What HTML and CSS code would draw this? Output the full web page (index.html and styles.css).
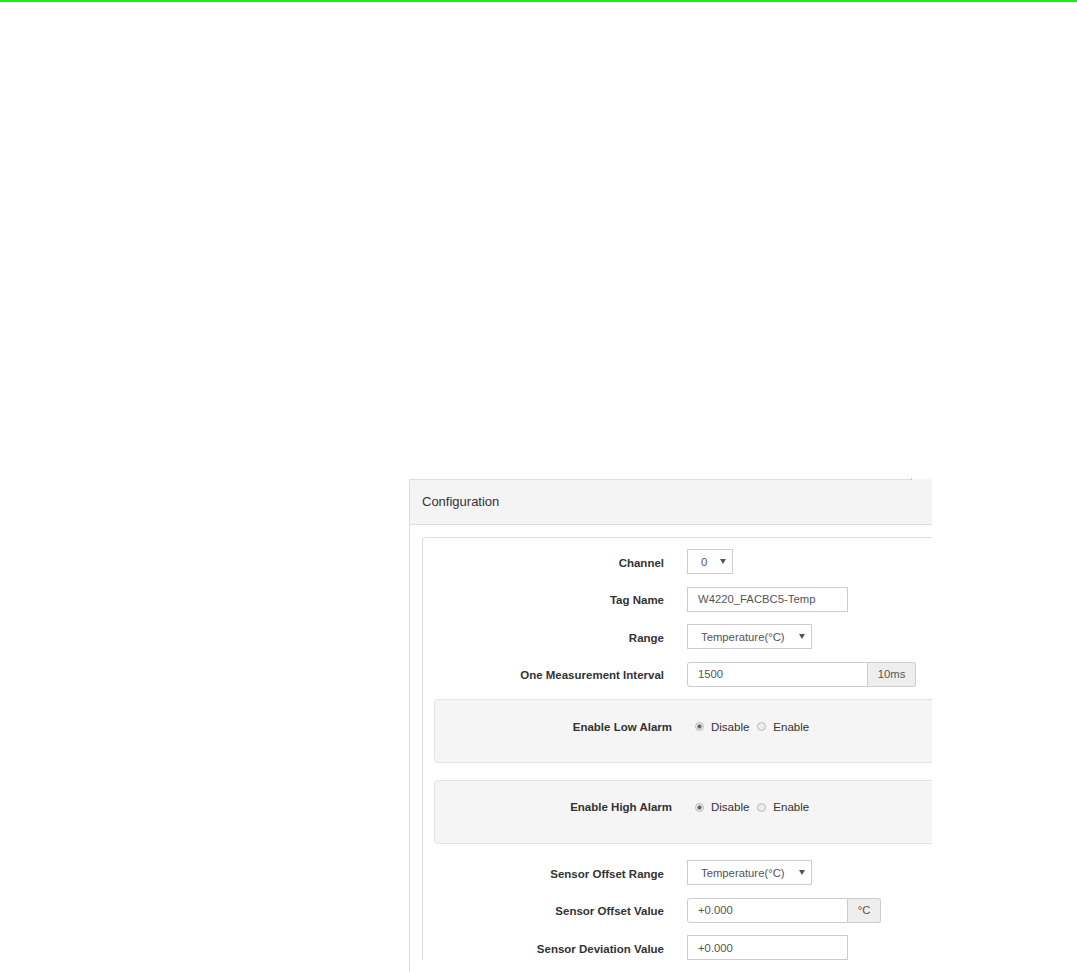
FILE: index.html
```html
<!DOCTYPE html>
<html lang="en">
<head>
    <meta charset="UTF-8">
    <meta name="viewport" content="width=device-width, initial-scale=1.0">
    <title>Configuration</title>
    <link rel="stylesheet" href="styles.css">
</head>
<body>
    <div class="topbar"></div>

    <main class="page">
        <div class="panel-clip">
            <section class="panel">
                <div class="panel-heading">Configuration</div>
                <div class="panel-body">
                    <form class="config-form">
                        <div class="form-row">
                            <label class="form-label" for="channel">Channel</label>
                            <div class="select-wrap select-channel">
                                <select id="channel" name="channel">
                                    <option>0</option>
                                    <option>1</option>
                                </select>
                            </div>
                        </div>
                        <div class="form-row">
                            <label class="form-label" for="tagName">Tag Name</label>
                            <input class="text-input" type="text" id="tagName" name="tagName" value="W4220_FACBC5-Temp">
                        </div>
                        <div class="form-row">
                            <label class="form-label" for="range">Range</label>
                            <div class="select-wrap select-range">
                                <select id="range" name="range">
                                    <option>Temperature(°C)</option>
                                </select>
                            </div>
                        </div>
                        <div class="form-row">
                            <label class="form-label" for="interval">One Measurement Interval</label>
                            <div class="input-group">
                                <input class="text-input group-input interval-input" type="text" id="interval" name="interval" value="1500">
                                <span class="addon addon-ms">10ms</span>
                            </div>
                        </div>

                        <div class="well">
                            <div class="form-row">
                                <span class="form-label well-label">Enable Low Alarm</span>
                                <div class="radio-group">
                                    <label class="radio"><input type="radio" name="lowAlarm" checked><span>Disable</span></label>
                                    <label class="radio"><input type="radio" name="lowAlarm"><span>Enable</span></label>
                                </div>
                            </div>
                        </div>

                        <div class="well">
                            <div class="form-row">
                                <span class="form-label well-label">Enable High Alarm</span>
                                <div class="radio-group">
                                    <label class="radio"><input type="radio" name="highAlarm" checked><span>Disable</span></label>
                                    <label class="radio"><input type="radio" name="highAlarm"><span>Enable</span></label>
                                </div>
                            </div>
                        </div>

                        <div class="form-row">
                            <label class="form-label" for="offsetRange">Sensor Offset Range</label>
                            <div class="select-wrap select-range">
                                <select id="offsetRange" name="offsetRange">
                                    <option>Temperature(°C)</option>
                                </select>
                            </div>
                        </div>
                        <div class="form-row">
                            <label class="form-label" for="offsetValue">Sensor Offset Value</label>
                            <div class="input-group">
                                <input class="text-input group-input" type="text" id="offsetValue" name="offsetValue" value="+0.000">
                                <span class="addon addon-deg">°C</span>
                            </div>
                        </div>
                        <div class="form-row">
                            <label class="form-label" for="deviation">Sensor Deviation Value</label>
                            <input class="text-input" type="text" id="deviation" name="deviation" value="+0.000">
                        </div>
                    </form>
                </div>
            </section>
        </div>
    </main>
</body>
</html>
```

FILE: styles.css
```css
/* Reset */
* {
    margin: 0;
    padding: 0;
    box-sizing: border-box;
}

body {
    font-family: 'Liberation Sans', Arial, sans-serif;
    background-color: #fff;
    color: #333;
    height: 972px;
    overflow: hidden;
}

.topbar {
    height: 2px;
    background-color: #0cf50c;
}

.page {
    padding: 476px 0 0 409px;
}

/* Panel is cut off on the right, like in the app frame */
.panel-clip {
    width: 523px;
    overflow: hidden;
}

.panel {
    position: relative;
    width: 720px;
    border: 1px solid #ddd;
    border-top: none;
    border-radius: 3px 3px 0 0;
}

/* top edge stops at the splitter tick */
.panel::before {
    content: "";
    position: absolute;
    top: 0;
    left: -1px;
    width: 503px;
    height: 1px;
    background-color: #ddd;
}

.panel::after {
    content: "";
    position: absolute;
    top: -4px;
    left: 501px;
    width: 1px;
    height: 5px;
    background-color: #ccc;
}

.panel-heading {
    margin-top: 1px;
    padding: 13px 12px;
    line-height: 19px;
    font-size: 13px;
    color: #333;
    background-color: #f4f4f4;
    border-bottom: 1px solid #ddd;
}

.panel-body {
    padding: 12px 0 0 12px;
}

.config-form {
    border: 1px solid #ddd;
    border-bottom: none;
    border-radius: 4px 4px 0 0;
    padding-top: 11px;
}

/* Rows */
.form-row {
    display: flex;
    align-items: center;
    height: 25px;
    margin-bottom: 12.5px;
}

.form-label {
    width: 241px;
    flex-shrink: 0;
    padding-top: 2px;
    text-align: right;
    font-size: 11.5px;
    font-weight: bold;
    color: #333;
    margin-right: 23px;
}

.well-label {
    width: 237px;
}

/* Controls */
.text-input,
.select-wrap select {
    height: 25px;
    border: 1px solid #ccc;
    background-color: #fff;
    font-family: 'Liberation Sans', Arial, sans-serif;
    font-size: 11.3px;
    color: #555;
    outline: none;
}

.text-input {
    width: 161px;
    padding: 0 10px;
}

.select-wrap {
    position: relative;
}

.select-wrap select {
    appearance: none;
    -webkit-appearance: none;
    padding: 0 0 0 13px;
    border-radius: 0;
}

.select-wrap::after {
    content: "";
    position: absolute;
    top: 10px;
    right: 7px;
    border-left: 3px solid transparent;
    border-right: 3px solid transparent;
    border-top: 5px solid #555;
    pointer-events: none;
}

.select-channel select {
    width: 46px;
}

.select-range select {
    width: 125px;
}

.input-group {
    display: flex;
}

.group-input {
    border-radius: 3px 0 0 3px;
}

.interval-input {
    width: 181px;
}

.addon {
    height: 25px;
    line-height: 23px;
    text-align: center;
    font-size: 11.3px;
    color: #555;
    background-color: #eee;
    border: 1px solid #ccc;
    border-left: none;
    border-radius: 0 3px 3px 0;
}

.addon-ms {
    width: 48px;
}

.addon-deg {
    width: 33px;
}

/* Alarm boxes */
.well {
    margin: 0 0 16.5px 11px;
    padding: 13px 0 24px;
    background-color: #f5f5f5;
    border: 1px solid #e3e3e3;
    border-radius: 4px;
}

.well .form-row {
    margin-bottom: 0;
}

.radio-group {
    display: flex;
    align-items: center;
    padding-top: 2px;
}

.radio {
    display: flex;
    align-items: center;
    font-size: 11.5px;
    color: #333;
    margin-right: 8px;
}

.radio input {
    appearance: none;
    -webkit-appearance: none;
    width: 9px;
    height: 9px;
    border: 1px solid #b9b9b9;
    border-radius: 50%;
    background-color: #ececec;
    margin-right: 7px;
}

.radio input:checked {
    background: radial-gradient(circle, #666 0 1.8px, #ececec 2.4px);
}
```
